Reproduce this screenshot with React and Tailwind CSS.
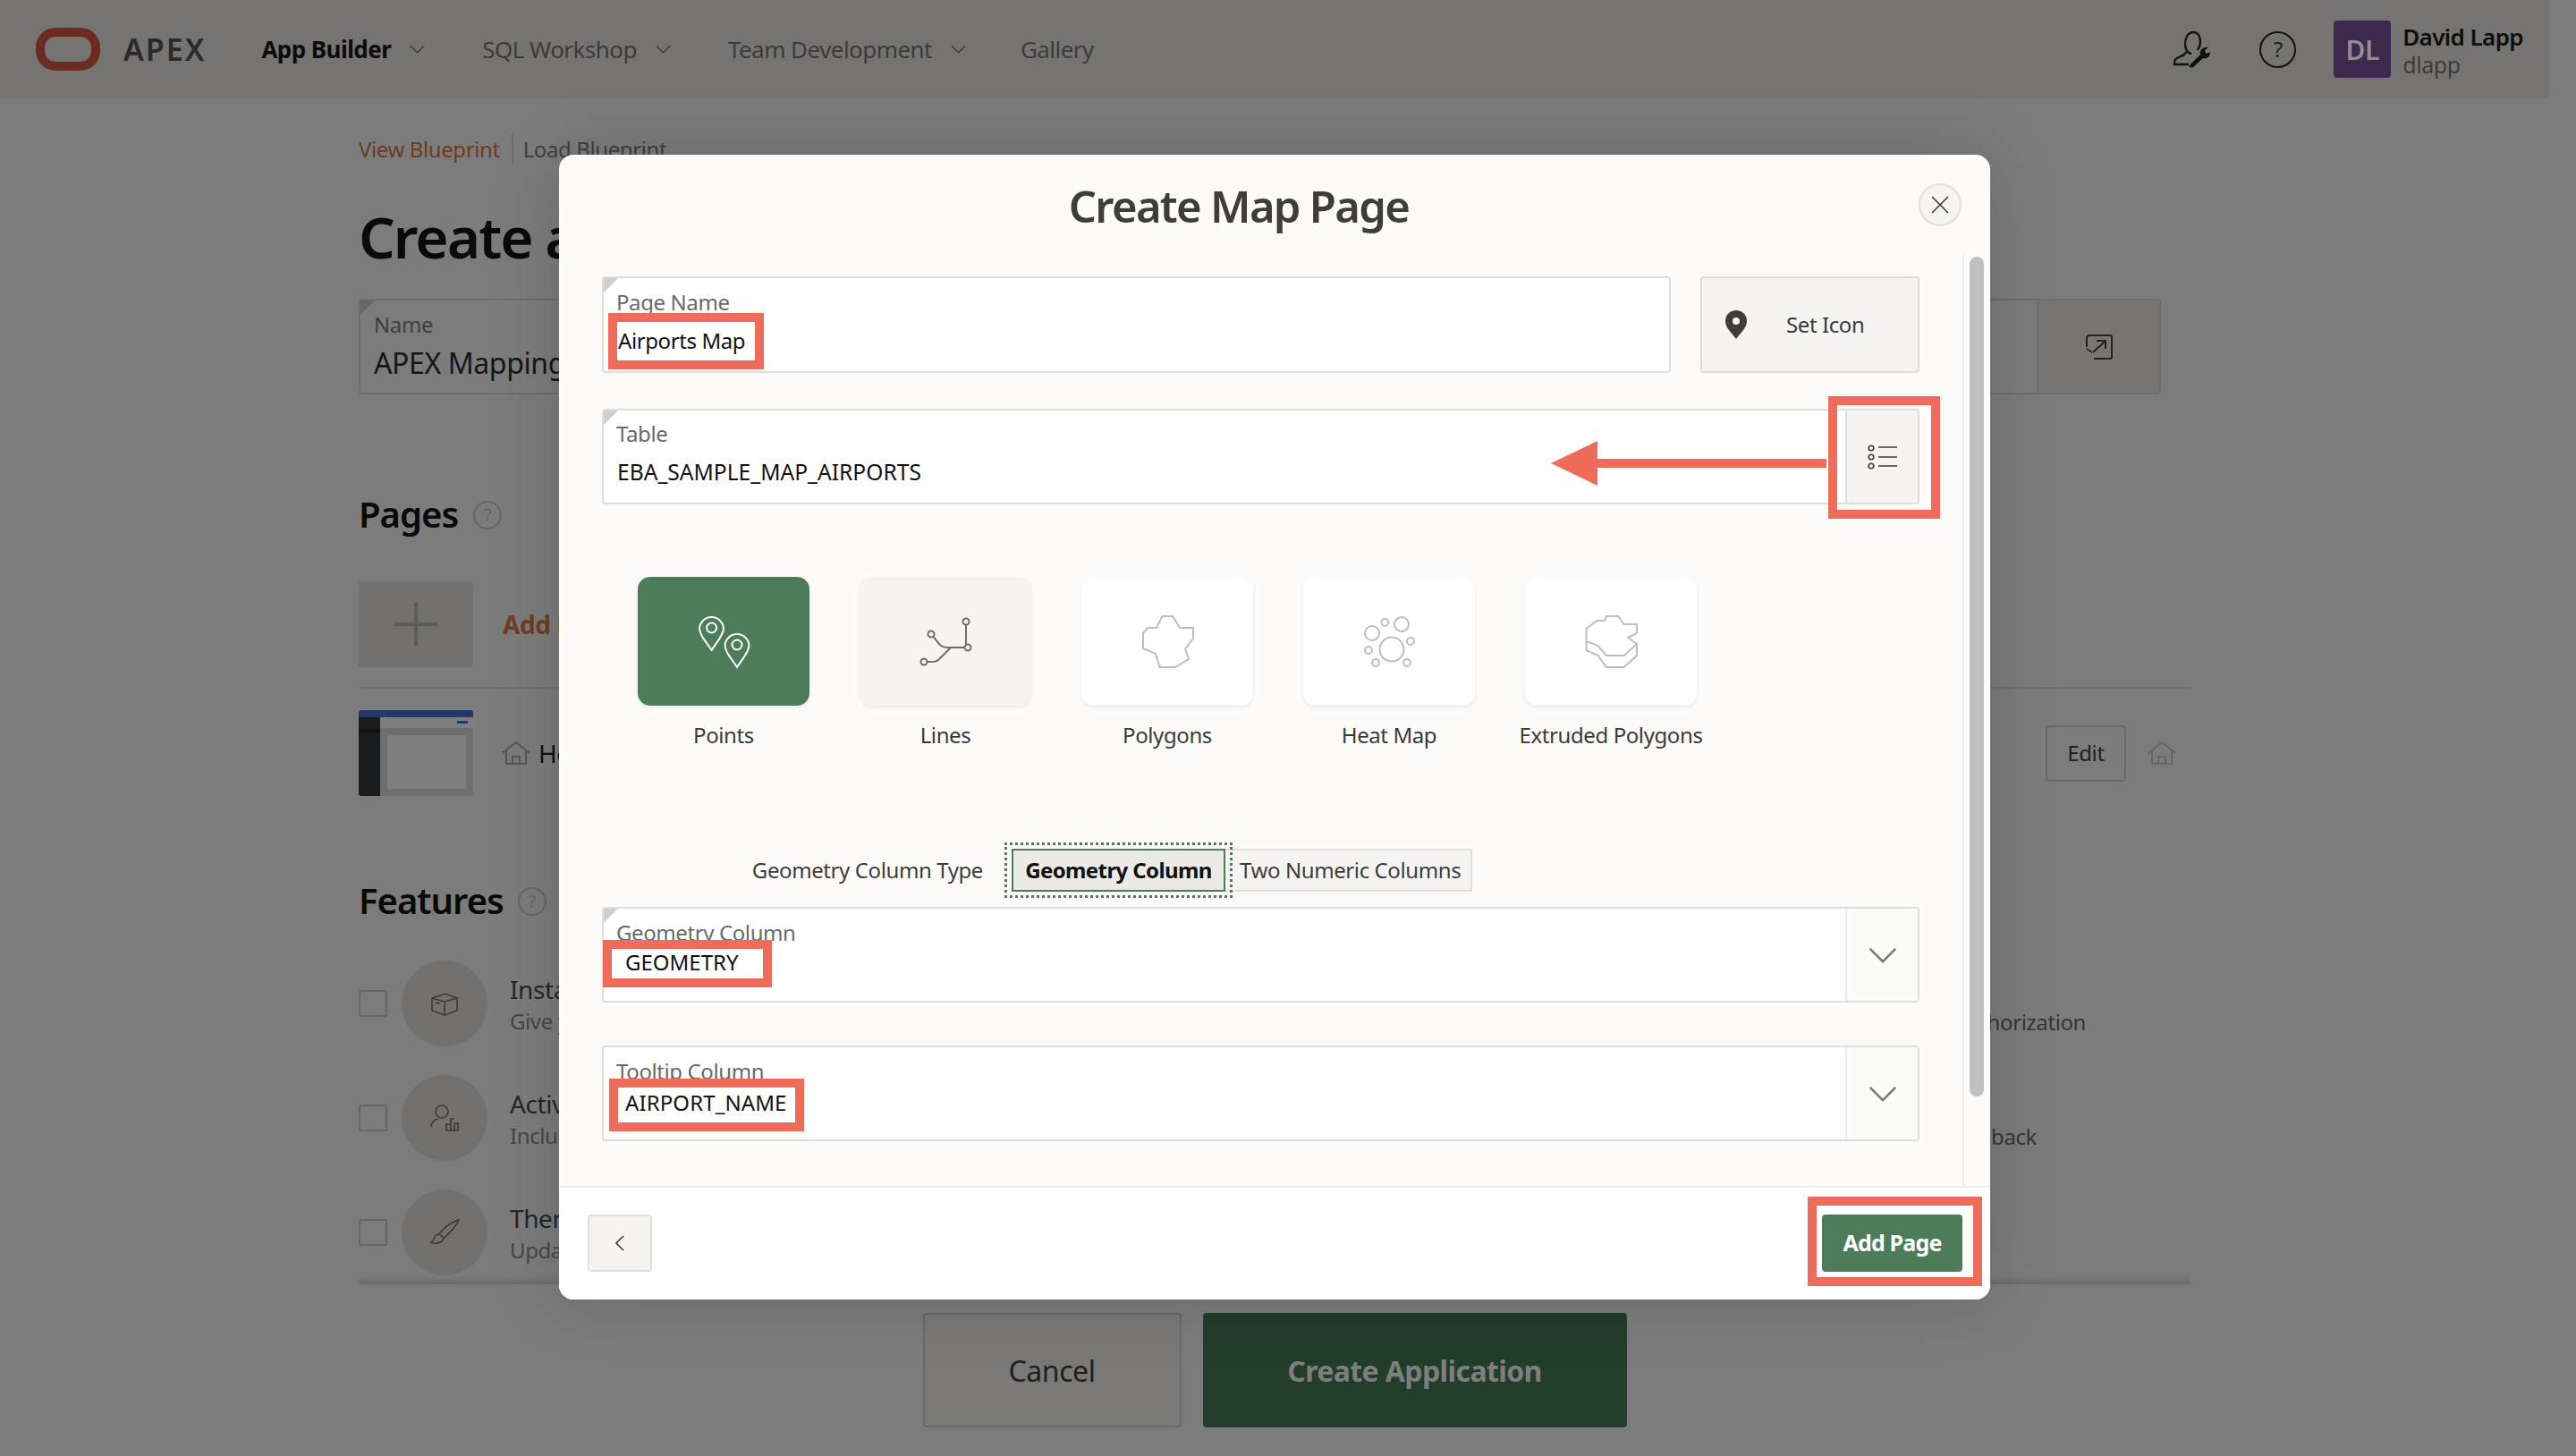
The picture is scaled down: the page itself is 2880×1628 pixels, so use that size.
import React from "react";

const Chev = ({ cls }) => (
  <svg viewBox="0 0 18 10" className={cls} fill="none" stroke="currentColor" strokeWidth="1.5"><path d="M1 1l8 8 8-8" /></svg>
);
const Help = ({ cls }) => (
  <span className={"flex items-center justify-center rounded-full border-2 " + cls}>?</span>
);
const HomeI = ({ cls }) => (
  <svg viewBox="0 0 32 28" className={cls} fill="none" stroke="currentColor" strokeWidth="2"><path d="M1 14L16 2l15 12M5 12v14h22V12M12 26v-8h8v8" /></svg>
);
const Corner = ({ cls = "bg-[#cfcecc]" }) => (
  <span className={"absolute left-0 top-0 w-[16px] h-[16px] [clip-path:polygon(0_0,100%_0,0_100%)] " + cls} />
);

function Feature({ label, desc, icon, right, rightCls = "" }) {
  return (
    <div className="flex items-start h-[96px]">
      <span className="w-[32px] h-[30px] mt-[33px] border-2 border-[#656563] rounded-[3px]" />
      <span className="ml-[16px] w-[96px] h-[96px] rounded-full bg-[#72716f] flex items-center justify-center text-[#3a3a38]">{icon}</span>
      <div className="ml-[25px] pt-[14px] flex flex-col">
        <span className="text-[28px] leading-[36px] text-[#262625]">{label}</span>
        <span className="text-[24px] leading-[36px] text-[#464644]">{desc}</span>
      </div>
      {right && <span className={"ml-auto mt-[51px] text-[24px] leading-[36px] text-[#353534] " + rightCls}>{right}</span>}
    </div>
  );
}

function Background() {
  return (
    <>
      <header className="h-[110px] w-[2850px] bg-[#757472] flex items-center pl-[40px] pr-[29px]">
        <svg viewBox="0 0 72 48" className="w-[72px] h-[48px] text-[#6a2b20]"><rect x="5" y="5" width="62" height="38" rx="17" fill="none" stroke="currentColor" strokeWidth="10" /></svg>
        <span className="ml-[26px] text-[34px] font-semibold tracking-[2px] text-[#2a2a29]">APEX</span>
        <nav className="ml-[62px] flex items-center text-[26px] tracking-[-0.55px] text-[#3c3b39]">
          <span className="font-bold text-[#0c0c0c]">App Builder</span>
          <Chev cls="ml-[21px] w-[17px] h-[10px]" />
          <span className="ml-[64px]">SQL Workshop</span>
          <Chev cls="ml-[21px] w-[17px] h-[10px]" />
          <span className="ml-[64px]">Team Development</span>
          <Chev cls="ml-[21px] w-[17px] h-[10px]" />
          <span className="ml-[61px]">Gallery</span>
        </nav>
        <div className="ml-auto flex items-center">
          <svg viewBox="0 0 42 42" className="w-[42px] h-[42px] text-[#111]" fill="none" stroke="currentColor" strokeWidth="2.4">
            <path d="M21 26c-4 0-7-5-7-11s3-13 9-13 8 6 8 11c0 3-1 6-3 9" />
            <path d="M15 24c-1 3-3 4-6 5-5 2-7 3-7 8v1h16" />
            <path d="M18 40l13-13c-1-4 2-8 6-8l3-1-4 5 2 3 4-2c0 5-3 8-8 7L22 42z" fill="currentColor" stroke="none" />
          </svg>
          <Help cls="ml-[55px] w-[41px] h-[41px] border-[#111] text-[24px] text-[#222]" />
          <span className="ml-[42px] w-[64px] h-[64px] rounded-[4px] bg-[#3e284d] flex items-center justify-center text-[30px] font-semibold text-[#8f8d92]">DL</span>
          <div className="ml-[13px] pb-[2px] flex flex-col">
            <span className="text-[26px] leading-[36px] font-semibold tracking-[-0.6px] text-[#0e0e0e]">David Lapp</span>
            <span className="text-[25px] leading-[26px] text-[#3c3c3a]">dlapp</span>
          </div>
        </div>
      </header>

      <main className="ml-[401px] w-[2048px]">
        <div className="pt-[40px] flex items-center h-[74px] text-[24px]">
          <span className="text-[#6c3a22]">View Blueprint</span>
          <span className="ml-[13px] w-[2px] h-[34px] bg-[#6f6f6d]" />
          <span className="ml-[11px] text-[#3f3f3d]">Load Blueprint</span>
        </div>
        <h1 className="mt-[45px] h-[72px] text-[64px] leading-[72px] font-semibold tracking-[-2px] text-[#0a0a0a]">Create an Application</h1>
        <div className="mt-[33px] relative w-[2015px] h-[107px] flex border-2 border-[#6e6e6c] rounded-[4px]">
          <Corner cls="bg-[#686866]" />
          <div className="flex-1 pl-[15px] pt-[11px] flex flex-col">
            <span className="text-[24px] leading-[32px] text-[#3f3f3d]">Name</span>
            <span className="mt-[5px] text-[32px] leading-[44px] text-[#161615]">APEX Mapping</span>
          </div>
          <span className="w-[137px] border-l-2 border-[#6e6e6c] flex items-center justify-center bg-[#777674] text-[#222]">
            <svg viewBox="0 0 30 28" className="w-[30px] h-[28px]" fill="none" stroke="currentColor" strokeWidth="2"><path d="M1 14V4a3 3 0 0 1 3-3h23a2 2 0 0 1 2 2v22a2 2 0 0 1-2 2H9M1 16l6 4" /><path d="M8 20L22 7M12 7h10v9" /></svg>
          </span>
        </div>

        <div className="mt-[110px] h-[48px] flex items-center">
          <h2 className="text-[40px] leading-[48px] font-semibold tracking-[-1px] text-[#0a0a0a]">Pages</h2>
          <Help cls="ml-[17px] mt-[2px] w-[32px] h-[32px] border-[#666664] text-[20px] text-[#666664]" />
        </div>
        <div className="mt-[51px] h-[96px] flex items-center">
          <span className="w-[128px] h-[96px] rounded-[2px] bg-[#72716f] flex items-center justify-center text-[#5c5c5a]">
            <svg viewBox="0 0 48 48" className="w-[48px] h-[48px]" stroke="currentColor" strokeWidth="4"><path d="M0 24h48M24 0v48" /></svg>
          </span>
          <span className="ml-[33px] text-[28px] font-bold text-[#6f3d24]">Add Page</span>
        </div>
        <div className="mt-[22px] h-[2px] bg-[#6f6f6d]" />
        <div className="mt-[24px] h-[96px] flex items-center">
          <svg viewBox="0 0 128 96" className="w-[128px] h-[96px] rounded-[3px]">
            <rect width="128" height="96" fill="#6e6f71" />
            <rect width="128" height="12" y="8" fill="#7d7d7d" />
            <rect width="128" height="8" fill="#24396b" />
            <rect x="110" y="12" width="12" height="3" fill="#24396b" />
            <rect width="24" height="88" y="8" fill="#1a1b1d" />
            <rect width="24" height="5" y="21" fill="#111213" />
            <rect x="32" y="28" width="88" height="60" fill="#7e7e7e" />
          </svg>
          <HomeI cls="ml-[32px] w-[32px] h-[28px] text-[#555553]" />
          <span className="ml-[9px] text-[28px] text-[#121211]">Home</span>
          <span className="ml-auto w-[90px] h-[63px] rounded-[4px] border-2 border-[#6a6a68] flex items-center justify-center text-[24px] text-[#1e1e1d]">Edit</span>
          <HomeI cls="ml-[24px] mr-[16px] w-[32px] h-[28px] text-[#656563]" />
        </div>

        <div className="mt-[93px] h-[48px] flex items-center">
          <h2 className="text-[40px] leading-[48px] font-semibold tracking-[-1px] text-[#0a0a0a]">Features</h2>
          <Help cls="ml-[16px] mt-[2px] w-[32px] h-[32px] border-[#666664] text-[20px] text-[#666664]" />
        </div>
        <div className="mt-[43px] flex flex-col gap-[32px]">
          <Feature label="Install Progressive Web App" desc="Give your users an app-like experience"
            right="Enable role-based user authorization" rightCls="mr-[117px]"
            icon={<svg viewBox="0 0 30 28" className="w-[30px] h-[28px]" fill="none" stroke="currentColor" strokeWidth="1.6"><path d="M1 8l14 4 14-4-13-5zM1 8v14l14 5 14-5V8M15 12v15M5 13l5 1" /></svg>} />
          <Feature label="Activity Reporting" desc="Include reports on application usage"
            right="Provide a mechanism for user feedback" rightCls="mr-[172px]"
            icon={<svg viewBox="0 0 32 32" className="w-[32px] h-[32px]" fill="none" stroke="currentColor" strokeWidth="1.6"><circle cx="13" cy="9" r="7" /><path d="M1 26c0-5 4-8 8-9M18 30h13V22h-4v8M23 30V17h4M18 30v-7h5" /></svg>} />
          <Feature label="Theme Style Selection" desc="Update the look of your application"
            icon={<svg viewBox="0 0 34 30" className="w-[34px] h-[30px]" fill="none" stroke="currentColor" strokeWidth="1.6"><path d="M33 1C24 4 16 10 11 17l5 4C23 16 29 9 33 1zM11 17c-4 0-5 2-6 6-1 2-3 3-4 3 5 2 13 2 15-5" /></svg>} />
        </div>
        <div className="h-[10px] bg-linear-to-b from-[#7c7c7c] to-[#6c6c6a]" />
        <div className="mt-[32px] flex justify-center gap-[24px]">
          <span className="w-[289px] h-[128px] pt-[2px] rounded-[4px] border-2 border-[#6a6a68] bg-[#7a7977] flex items-center justify-center text-[32px] text-[#1e1e1d]">Cancel</span>
          <span className="w-[474px] h-[128px] pt-[2px] rounded-[4px] bg-[#233d2b] flex items-center justify-center text-[32px] font-bold tracking-[-0.6px] text-[#7e7e7e]">Create Application</span>
        </div>
      </main>
    </>
  );
}

function CardIcon({ children, color }) {
  return <svg viewBox="0 0 80 80" className="w-[80px] h-[80px]" fill="none" stroke={color} strokeWidth="2">{children}</svg>;
}

const pin = "C20 40 13 33 13 25A13.6 13.6 0 0 1 40 25C40 33 33 40 26.6 50Z";

const cards = [
  { name: "Points", cls: "bg-[#4c7c59]", icon: (
    <CardIcon color="#ffffff">
      <path d={"M26.6 50" + pin} /><circle cx="26.6" cy="25" r="5.5" />
      <path transform="translate(28.5 19)" d={"M26.6 50" + pin} /><circle cx="55" cy="44" r="5.5" />
    </CardIcon>) },
  { name: "Lines", cls: "bg-[#f5f4f2]", icon: (
    <CardIcon color="#6f6e6c">
      <circle cx="63" cy="18" r="3.5" /><circle cx="65" cy="47" r="3.5" /><circle cx="24" cy="32" r="3.5" /><circle cx="16" cy="63" r="3.5" />
      <path d="M26.5 35C31 40 34 47 41 47H61.5M19.5 63C28 63 30 63 33 60L46 47M63 21.5V43.5" />
    </CardIcon>) },
  { name: "Polygons", cls: "bg-white", icon: (
    <CardIcon color="#bdbdbb"><path d="M34.5 12H46L54 25H69V37L60 49L64 60L49 69H31.5L27 54L13 48V31L18 25H28Z" /></CardIcon>) },
  { name: "Heat Map", cls: "bg-white", icon: (
    <CardIcon color="#bdbdbb">
      <circle cx="43" cy="49" r="13.5" /><circle cx="54" cy="21" r="8" /><circle cx="21" cy="31" r="8" />
      <circle cx="35.4" cy="19" r="4" /><circle cx="64" cy="40" r="4" /><circle cx="17" cy="50" r="4" /><circle cx="25" cy="64" r="4" /><circle cx="60" cy="64" r="4" />
    </CardIcon>) },
  { name: "Extruded Polygons", cls: "bg-white", icon: (
    <CardIcon color="#bdbdbb">
      <path d="M35 12H48L54.5 21H69V31L59.3 36L69 43L54.5 56H35L25.5 45L12.5 40V26L24.3 17H33Z" />
      <path d="M12.5 40V50L25.5 56L35 69H54.5L69 56V43" />
    </CardIcon>) },
];

function Field({ h, children, cls = "" }) {
  return <div className={"relative border-2 border-[#dfdedb] rounded-[4px] bg-white " + h + " " + cls}>{children}</div>;
}

function Modal() {
  return (
    <div className="absolute left-[625px] top-[173px] w-[1600px] h-[1280px] rounded-[16px] bg-[#fcfbfa] shadow-[0_0_80px_rgba(0,0,0,0.16)] flex flex-col overflow-hidden">
      <div className="h-[112px] shrink-0 relative flex items-center justify-center">
        <h2 className="mt-[3px] text-[49px] font-semibold tracking-[-1.7px] text-[#3e3d3a] -translate-x-[40px]">Create Map Page</h2>
        <span className="absolute left-[1520px] top-[32px] w-[48px] h-[48px] rounded-full bg-[#f5f4f2] border-2 border-[#e0dfdc] flex items-center justify-center">
          <svg viewBox="0 0 20 20" className="w-[20px] h-[20px]" stroke="#3a3a38" strokeWidth="1.6"><path d="M1 1l18 18M19 1L1 19" /></svg>
        </span>
      </div>

      <div className="flex-1 flex min-h-0">
        <div className="w-[1571px] border-r-2 border-[#ecebe9] pl-[48px] pt-[24px] pr-[48px]">
          <div className="flex gap-[33px]">
            <Field h="h-[108px]" cls="flex-1">
              <Corner />
              <div className="pl-[14px] pt-[11px] text-[24px] leading-[32px] text-[#6a6a68]">Page Name</div>
              <div className="absolute left-[5px] top-[39px] w-[174px] h-[63px] border-[10px] border-[#ef6c5a] bg-white flex items-center pl-px pb-[2px] text-[24px] text-[#111] whitespace-nowrap">Airports Map</div>
            </Field>
            <div className="w-[245px] h-[108px] rounded-[4px] border-2 border-[#dfdedb] bg-[#f5f4f2] flex items-center pl-[26px] text-[24px] text-[#3a3a38]">
              <svg viewBox="0 0 24 32" className="w-[24px] h-[32px]"><path fillRule="evenodd" fill="#3e3d3a" d="M12 0C5 0 0 5 0 12c0 8 8 14 12 20 4-6 12-12 12-20C24 5 19 0 12 0zm0 8a4 4 0 1 1 0 8 4 4 0 0 1 0-8z" /></svg>
              <span className="ml-[44px]">Set Icon</span>
            </div>
          </div>

          <Field h="h-[107px]" cls="mt-[40px] flex">
            <Corner />
            <div className="flex-1 pl-[14px] pt-[10px] flex flex-col">
              <span className="text-[24px] leading-[32px] text-[#6a6a68]">Table</span>
              <span className="mt-[10px] pl-[1px] text-[24.6px] tracking-[0px] leading-[34px] text-[#111]">EBA_SAMPLE_MAP_AIRPORTS</span>
            </div>
            <span className="w-[81px] border-l-2 border-[#dfdedb] bg-[#f5f4f2] rounded-r-[3px] flex items-center justify-center">
              <svg viewBox="0 0 34 28" className="w-[34px] h-[28px]" fill="none" stroke="#3e3d3a" strokeWidth="1.6"><circle cx="4" cy="4" r="2.8" /><circle cx="4" cy="14" r="2.8" /><circle cx="4" cy="24" r="2.8" /><path d="M12 3h21M12 14h21M12 24h21" /></svg>
            </span>
            <span className="absolute left-[1369px] top-[-16px] w-[125px] h-[137px] border-[10px] border-[#ef6c5a]" />
            <svg viewBox="0 0 308 50" className="absolute left-[1059px] top-[34px] w-[308px] h-[50px]"><path fill="#ef6c5a" d="M0 25L52 0V20H308V30H52V50Z" /></svg>
          </Field>

          <div className="mt-[81px] ml-[40px] flex gap-[56px]">
            {cards.map((c) => (
              <div key={c.name} className="w-[192px] flex flex-col items-center">
                <div className={"w-[192px] h-[144px] rounded-[14px] shadow-[0_2px_4px_rgba(0,0,0,0.07)] flex items-center justify-center " + c.cls}>{c.icon}</div>
                <span className="mt-[16px] h-[34px] leading-[34px] text-[24px] text-[#3a3a38] whitespace-nowrap">{c.name}</span>
              </div>
            ))}
          </div>

          <div className="mt-[110px] flex items-center text-[24px] text-[#3e3d3a]">
            <span className="w-[426px] text-right whitespace-nowrap">Geometry Column Type</span>
            <span className="ml-[32px] relative w-[239px] h-[48px] border-2 border-[#4c7c59] bg-[#ebeae6] flex items-center justify-center font-bold tracking-[-0.6px] text-[#111]">
              Geometry Column
              <span className="absolute -inset-x-[10px] -inset-y-[9px] border-[3px] border-dotted border-[#4c7c59]" />
            </span>
            <span className="w-[276px] h-[48px] border-2 border-l-0 border-[#e0dfdc] bg-[#f5f4f2] flex items-center pl-[16px] whitespace-nowrap">Two Numeric Columns</span>
          </div>

          <Field h="h-[107px]" cls="mt-[17px] flex">
            <Corner />
            <div className="flex-1 pl-[14px] pt-[11px] text-[24px] leading-[32px] text-[#6a6a68]">Geometry Column</div>
            <span className="w-[81px] border-l-2 border-[#ecebe9] bg-[#fbfbfa] rounded-r-[3px] flex items-center justify-center text-[#7a7a78]"><Chev cls="w-[32px] h-[18px]" /></span>
            <div className="absolute left-[-1px] top-[35px] w-[189px] h-[53px] border-[10px] border-[#ef6c5a] bg-white flex items-center pl-[15px] pb-[3px] text-[24px] tracking-[0px] text-[#111]">GEOMETRY</div>
          </Field>

          <Field h="h-[107px]" cls="mt-[48px] flex">
            <div className="flex-1 pl-[14px] pt-[11px] text-[24px] leading-[32px] text-[#6a6a68]">Tooltip Column</div>
            <span className="w-[81px] border-l-2 border-[#ecebe9] bg-[#fbfbfa] rounded-r-[3px] flex items-center justify-center text-[#7a7a78]"><Chev cls="w-[32px] h-[18px]" /></span>
            <div className="absolute left-[6px] top-[35px] w-[218px] h-[59px] border-[10px] border-[#ef6c5a] bg-white flex items-center pl-[8px] pb-[6px] text-[24px] tracking-[0.1px] text-[#111]">AIRPORT_NAME</div>
          </Field>
        </div>
        <div className="flex-1 pl-[6px] pt-[2px]">
          <div className="w-[16px] h-[939px] rounded-full bg-[#c0c0c0]" />
        </div>
      </div>

      <div className="h-[127px] shrink-0 bg-white border-t-2 border-[#eeedeb] flex items-center justify-between pl-[32px] pr-[31px] pb-[2px]">
        <span className="w-[72px] h-[64px] rounded-[4px] border-2 border-[#e0dfdc] bg-[#f5f4f2] flex items-center justify-center">
          <svg viewBox="0 0 10 18" className="w-[10px] h-[18px]" fill="none" stroke="#3a3a38" strokeWidth="1.6"><path d="M9 1L1 9l8 8" /></svg>
        </span>
        <span className="relative w-[157px] h-[64px] rounded-[4px] bg-[#4c7c59] flex items-center justify-center text-[25px] font-bold tracking-[-0.8px] text-white">
          Add Page
          <span className="absolute -left-[16px] -right-[22px] -top-[20px] -bottom-[16px] border-[10px] border-[#ef6c5a]" />
        </span>
      </div>
    </div>
  );
}

export default function App() {
  return (
    <div className="relative w-[2880px] h-[1628px] overflow-hidden bg-[#7c7c7c] tracking-[-0.4px] font-['Noto_Sans',sans-serif]">
      <Background />
      <Modal />
    </div>
  );
}
